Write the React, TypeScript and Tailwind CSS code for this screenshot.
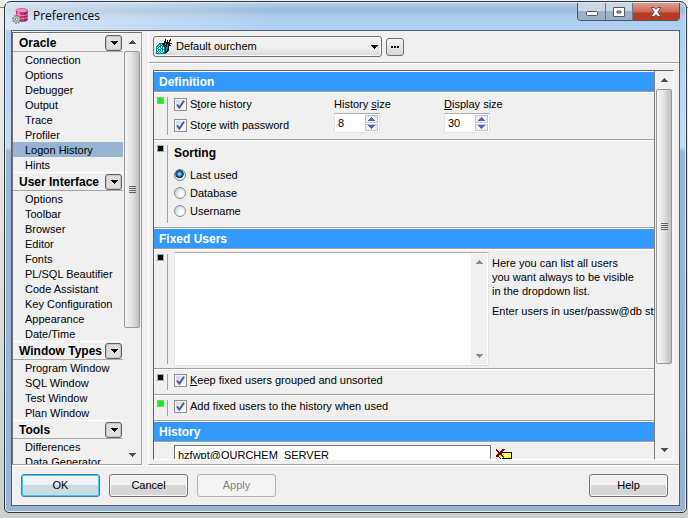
import { ReactNode } from "react";
import clsx from "clsx";

const MENU = [
    { title: "Oracle", items: ["Connection", "Options", "Debugger", "Output", "Trace", "Profiler", "Logon History", "Hints"] },
    {
        title: "User Interface",
        items: [
            "Options",
            "Toolbar",
            "Browser",
            "Editor",
            "Fonts",
            "PL/SQL Beautifier",
            "Code Assistant",
            "Key Configuration",
            "Appearance",
            "Date/Time",
        ],
    },
    { title: "Window Types", items: ["Program Window", "SQL Window", "Test Window", "Plan Window"] },
    { title: "Tools", items: ["Differences", "Data Generator"] },
];

const ACTIVE = "Logon History";

function Arrow({ up = false, className }: { up?: boolean; className?: string }) {
    return (
        <svg viewBox="0 0 8 4" className={clsx("h-1 w-2 shrink-0", className)} fill="currentColor" shapeRendering="crispEdges">
            <path d={up ? "M4 0L8 4H0z" : "M0 0H8L4 4z"} />
        </svg>
    );
}

function ScrollBar({ size, className }: { size: string; className?: string }) {
    return (
        <div className={clsx("flex w-4 shrink-0 flex-col bg-[#f0f0f0]", className)}>
            <button aria-label="Scroll up" className="flex h-[18px] shrink-0 items-center justify-center text-[#505050]">
                <Arrow up />
            </button>
            <div className="min-h-0 flex-1">
                <div
                    className={clsx(
                        "flex w-full flex-col items-center justify-center gap-px rounded-xs border border-[#989898] bg-linear-to-r from-[#f6f6f6] via-[#e2e2e4] to-[#bfc0c4]",
                        size
                    )}
                >
                    {[0, 1, 2, 3].map((i) => (
                        <span key={i} className="h-px w-[7px] bg-[#606060]" />
                    ))}
                </div>
            </div>
            <button aria-label="Scroll down" className="flex h-[18px] shrink-0 items-center justify-center text-[#505050]">
                <Arrow />
            </button>
        </div>
    );
}

function CheckBox({ children }: { children: ReactNode }) {
    return (
        <label className="flex h-[21px] items-center gap-[3px]">
            <span className="grid h-[13px] w-[13px] place-items-center">
                <input
                    type="checkbox"
                    defaultChecked
                    className="peer col-start-1 row-start-1 h-[13px] w-[13px] appearance-none border border-[#8e8f8f] bg-linear-to-br from-[#cfd3da] to-white shadow-[inset_0_0_0_1px_#f4f4f4]"
                />
                <svg viewBox="0 0 9 9" className="pointer-events-none col-start-1 row-start-1 hidden h-[9px] w-[9px] peer-checked:block">
                    <path d="M1 4.5L3.4 7.6L8 0.8" fill="none" stroke="#3f58a0" strokeWidth="1.9" />
                </svg>
            </span>
            <span>{children}</span>
        </label>
    );
}

function Radio({ label, checked = false }: { label: string; checked?: boolean }) {
    return (
        <label className="flex h-[18px] items-center gap-1">
            <input
                type="radio"
                name="sorting"
                defaultChecked={checked}
                className="h-3 w-3 appearance-none rounded-full border border-[#8e8f8f] bg-[radial-gradient(circle_at_65%_65%,#ffffff_20%,#cdd0d4_80%)] checked:border-[#70808c] checked:bg-[radial-gradient(circle_at_45%_40%,#8fe0fa_8%,#1c6a9c_30%,#0f3a60_48%,#f4f4f4_56%)]"
            />
            {label}
        </label>
    );
}

function NumberField({ id, value, children }: { id: string; value: string; children: ReactNode }) {
    return (
        <div className="flex w-[110px] flex-col pt-[3px]">
            <label htmlFor={id} className="flex h-[17px] items-center">
                <span>{children}</span>
            </label>
            <div className="flex h-5 w-[46px] border border-[#e2e3ea] border-t-[#abadb3] bg-white p-px">
                <input id={id} defaultValue={value} className="w-0 min-w-0 flex-1 pl-[2px] outline-none" />
                <div className="flex w-[13px] flex-col gap-px text-[#4a66c0]">
                    <button aria-label={`Increase ${id}`} className="flex flex-1 items-center justify-center border border-[#c3c4c9] bg-[#f1f1f3]">
                        <Arrow up className="w-[7px]" />
                    </button>
                    <button aria-label={`Decrease ${id}`} className="flex flex-1 items-center justify-center border border-[#c3c4c9] bg-[#f1f1f3]">
                        <Arrow className="w-[7px]" />
                    </button>
                </div>
            </div>
        </div>
    );
}

function Heading({ children }: { children: ReactNode }) {
    return (
        <h2 className="flex h-[21px] shrink-0 items-center border-t border-b border-t-white border-b-[#a0a0a0] bg-[#3399ff] pl-[5px] text-xs font-bold text-white">
            {children}
        </h2>
    );
}

function Section({ changed = false, className, children }: { changed?: boolean; className?: string; children: ReactNode }) {
    return (
        <section className={clsx("flex shrink-0 border-t border-b border-t-white border-b-[#a0a0a0] px-[3px]", className)}>
            <div className="w-[10px] shrink-0 pt-1">
                <div className={clsx("h-[7px] w-[7px] border border-[#a8a8a8]", changed ? "bg-[#00ff00]" : "bg-black")} />
            </div>
            <div className="my-1 w-px shrink-0 bg-[#a0a0a0]" />
            <div className="min-w-0 flex-1 pl-[6px]">{children}</div>
        </section>
    );
}

function PushButton({ children, primary = false, disabled = false }: { children: ReactNode; primary?: boolean; disabled?: boolean }) {
    return (
        <button
            disabled={disabled}
            className={clsx(
                "h-[23px] w-[79px] rounded-[3px] border",
                disabled && "border-[#b0b4b8] bg-[#f4f4f4] text-[#838383]",
                primary && "border-[#3c7fb1] bg-linear-to-b from-[#f0f5f8] from-50% to-[#ccdbe3] to-50% shadow-[inset_0_0_0_1px_#43c8f0]",
                !primary && !disabled && "border-[#707070] bg-linear-to-b from-[#f1f1f1] from-50% to-[#d6d6d6] to-50% shadow-[inset_0_0_0_1px_#f8f8f8]"
            )}
        >
            {children}
        </button>
    );
}

function DatabaseIcon() {
    return (
        <svg viewBox="0 0 16 16" className="h-4 w-4 shrink-0">
            <path d="M4 2.500V12C4 14.500 15.500 14.500 15.500 12V2.500z" fill="#c4326f" />
            <path d="M5 3V12L8 13.500V4z" fill="#e887ad" />
            <path d="M12 4V13.500L15.500 12V2.500z" fill="#a51c59" />
            <ellipse cx="9.750" cy="2.500" rx="5.750" ry="2" fill="#ee9bbb" stroke="#b53068" strokeWidth=".6" />
            <path d="M4 6.500C6 8 13 8 15.500 6.500M4 9.500C6 11 13 11 15.500 9.500" stroke="#f3b4cb" strokeWidth=".7" fill="none" />
            <circle cx="4.700" cy="11.200" r="4.100" fill="none" stroke="#666" strokeWidth="1" strokeDasharray="1.6 1.6" />
            <circle cx="4.700" cy="11.200" r="3.300" fill="#d4d4d4" stroke="#777" strokeWidth=".8" />
            <circle cx="4.700" cy="11.200" r="1.400" fill="#f4f4f4" stroke="#6b6b6b" strokeWidth=".9" />
        </svg>
    );
}

function ProfileIcon() {
    return (
        <svg viewBox="0 0 16 15" className="h-[15px] w-4 shrink-0" shapeRendering="crispEdges">
            <path d="M0 8L3 4H8L10 7V15H0z" fill="#008888" />
            <path
                d="M1 8h1v1H1zM3 6h1v1H3zM5 5h1v1H5zM3 8h1v2H3zM5 7h1v2H5zM1 10h1v2H1zM3 11h1v1H3zM5 10h1v2H5zM7 11h1v2H7zM1 13h1v1H1zM3 13h1v1H3zM5 13h1v1H5zM7 8h1v2H7z"
                fill="#c8ffff"
            />
            <path d="M2 7h1v1H2zM4 9h1v1H4zM6 6h1v1H6zM2 12h1v1H2zM4 12h1v1H4zM6 12h1v2H6zM2 9h1v1H2z" fill="#40e8e8" />
            <path d="M6 4H8V2H9V0H10V3H11V1H12V3H13V1H14V0H15V2H14V4H16V5H14V6H15V7H13V11L11 14H9V8L6 6z" fill="#101818" />
            <path d="M9 4h1v2H9zM11 5h1v5h-1zM10 8h1v4h-1z" fill="#00a0a0" />
        </svg>
    );
}

function ClearIcon() {
    return (
        <svg viewBox="0 0 16 14" className="h-[14px] w-4 shrink-0" shapeRendering="crispEdges">
            <path d="M2 7L6 3.500H15.500V9.500H6V11z" fill="#ffff30" stroke="#000" />
            <path d="M7 4h1v1H7zM9 4h1v1H9zM11 4h1v1h-1zM13 4h1v1h-1zM8 6h1v1H8zM10 6h1v1h-1zM12 6h1v1h-1z" fill="#fff" />
            <path d="M0 1L8 8M8 0L0 8" stroke="#800000" strokeWidth="1.6" fill="none" />
        </svg>
    );
}

function TitleBar() {
    return (
        <header className="flex h-[27px] shrink-0 items-start justify-between bg-linear-to-r from-white/50 to-transparent to-40% pr-[5px] pl-[6px]">
            <div className="flex h-[26px] items-center gap-[5px]">
                <DatabaseIcon />
                <h1 className="font-['Open_Sans','Noto_Sans',sans-serif] text-xs">Preferences</h1>
            </div>
            <div className="flex h-[18px] overflow-hidden rounded-b-[4px] border border-t-0 border-[#46566a]">
                <button aria-label="Minimize" className="flex w-7 items-center justify-center border-r border-[#66788c] bg-linear-to-b from-[#c9d6e3] from-50% to-[#9db1c6] to-50%">
                    <svg viewBox="0 0 12 10" className="h-[10px] w-3">
                        <rect x=".5" y="4.5" width="11" height="4" rx="1" fill="#fff" stroke="#4c5a6a" />
                    </svg>
                </button>
                <button aria-label="Maximize" className="flex w-[27px] items-center justify-center border-r border-[#66788c] bg-linear-to-b from-[#c9d6e3] from-50% to-[#9db1c6] to-50%">
                    <svg viewBox="0 0 12 10" className="h-[10px] w-3">
                        <path d="M.5 .5H11.500V9.500H.5zM4 4H8V6H4z" fill="#fff" fillRule="evenodd" stroke="#4c5a6a" />
                    </svg>
                </button>
                <button aria-label="Close" className="flex w-[46px] items-center justify-center bg-linear-to-b from-[#dd9c8e] from-0% via-[#cf6a55] via-50% to-[#b93a22] to-60%">
                    <svg viewBox="0 0 12 10" className="h-[10px] w-3">
                        <path d="M1 .5H4.300L6 2.400L7.700 .5H11L7.800 5L11 9.500H7.700L6 7.600L4.300 9.500H1L4.200 5z" fill="#fff" stroke="#6a3a3a" strokeWidth=".9" />
                    </svg>
                </button>
            </div>
        </header>
    );
}

function Sidebar() {
    return (
        <aside className="flex w-[130px] shrink-0 border border-t-[#707070] border-r-[#a0a0a0] border-b-[#a0a0a0] border-l-[#707070]">
            <nav className="min-w-0 flex-1 overflow-hidden">
                {MENU.map((group) => (
                    <div key={group.title}>
                        <div className="flex h-[19px] items-center justify-between border-t border-b border-t-white border-b-[#a8a8a8] pr-px pl-[6px]">
                            <h2 className="text-xs font-bold">{group.title}</h2>
                            <button
                                aria-label={`Collapse ${group.title}`}
                                className="flex h-4 w-[17px] items-center justify-center rounded-[3px] border border-[#606060] bg-[#dedede] shadow-[inset_0_0_0_1px_#c4c4c4]"
                            >
                                <Arrow />
                            </button>
                        </div>
                        <ul>
                            {group.items.map((item) => (
                                <li key={item}>
                                    <a href="#" className={clsx("block h-[15px] pl-3 leading-4 whitespace-nowrap", item === ACTIVE && "bg-[#99b4d1]")}>
                                        {item}
                                    </a>
                                </li>
                            ))}
                        </ul>
                    </div>
                ))}
            </nav>
            <ScrollBar size="h-[70%]" className="mx-px" />
        </aside>
    );
}

function Toolbar() {
    return (
        <div className="flex shrink-0 items-center gap-1 border-b border-[#a0a0a0] pt-1 pb-[5px] pl-1">
            <div className="flex h-[21px] w-[229px] items-center rounded-[3px] border border-[#707070] bg-linear-to-b from-[#f1f1f1] from-50% to-[#d8d8d8] pr-[3px] pl-[2px] shadow-[inset_0_0_0_1px_#f8f8f8]">
                <ProfileIcon />
                <select aria-label="Preference set" className="min-w-0 flex-1 appearance-none bg-transparent pl-1 outline-none">
                    <option>Default ourchem</option>
                </select>
                <Arrow />
            </div>
            <button
                aria-label="Edit preference sets"
                className="flex h-[18px] w-[18px] items-center justify-center gap-px rounded-[3px] border border-[#707070] bg-linear-to-b from-[#f4f4f4] to-[#d8d8d8]"
            >
                <span className="h-[2px] w-[2px] bg-black" />
                <span className="h-[2px] w-[2px] bg-black" />
                <span className="h-[2px] w-[2px] bg-black" />
            </button>
        </div>
    );
}

function Settings() {
    return (
        <div className="flex min-h-0 min-w-0 flex-1 border border-t-[#606060] border-r-white border-b-white border-l-[#606060]">
            <div className="flex min-w-0 flex-1 flex-col overflow-hidden border-r border-[#808080]">
                <Heading>Definition</Heading>
                <Section changed className="h-12">
                    <div className="flex">
                        <div className="w-40 pt-px">
                            <CheckBox>
                                S<u>t</u>ore history
                            </CheckBox>
                            <CheckBox>
                                Sto<u>r</u>e with password
                            </CheckBox>
                        </div>
                        <NumberField id="history-size" value="8">
                            History <u>s</u>ize
                        </NumberField>
                        <NumberField id="display-size" value="30">
                            <u>D</u>isplay size
                        </NumberField>
                    </div>
                </Section>
                <Section className="h-[88px]">
                    <h3 className="pt-1 pb-[5px] text-xs leading-4 font-bold">Sorting</h3>
                    <Radio label="Last used" checked />
                    <Radio label="Database" />
                    <Radio label="Username" />
                </Section>
                <Heading>Fixed Users</Heading>
                <Section>
                    <div className="flex gap-[3px] pt-[2px] pb-[2px]">
                        <div className="flex h-[114px] w-[315px] shrink-0 border border-[#e2e3ea] border-t-[#abadb3] bg-white p-px">
                            <textarea aria-label="Fixed users" className="min-w-0 flex-1 resize-none outline-none" />
                            <div className="flex w-4 flex-col justify-between bg-[#f0f0f0] py-[6px] text-[#8a8a8a]">
                                <Arrow up className="self-center" />
                                <Arrow className="self-center" />
                            </div>
                        </div>
                        <div className="pt-1 leading-[14px] whitespace-nowrap">
                            <p>
                                Here you can list all users
                                <br />
                                you want always to be visible
                                <br />
                                in the dropdown list.
                            </p>
                            <p className="pt-[6px]">Enter users in user/passw@db style</p>
                        </div>
                    </div>
                </Section>
                <Section className="h-[26px]">
                    <CheckBox>
                        <u>K</u>eep fixed users grouped and unsorted
                    </CheckBox>
                </Section>
                <Section changed className="h-[26px]">
                    <CheckBox>Add fixed users to the history when used</CheckBox>
                </Section>
                <Heading>History</Heading>
                <div className="flex shrink-0 items-start gap-[5px] border-t border-white pt-[2px] pl-5">
                    <input
                        aria-label="History entry"
                        defaultValue="hzfwpt@OURCHEM_SERVER"
                        className="h-[19px] w-[317px] border border-[#707070] bg-white pl-[3px] outline-none"
                    />
                    <button aria-label="Clear history" className="pt-1">
                        <ClearIcon />
                    </button>
                </div>
            </div>
            <ScrollBar size="h-[78%]" className="mx-px" />
        </div>
    );
}

export default function App() {
    return (
        <div className="flex h-screen bg-[linear-gradient(#f0f0f0_7px,#808080_7px,#808080_8px,#f0f0f0_8px,#cdcfcd)] pt-px pr-px pb-[5px] pl-1 font-['Liberation_Sans',Arial,sans-serif] text-[11px] text-black">
            <div className="flex min-w-0 flex-1 flex-col rounded-t-[7px] rounded-b-[5px] border border-[#30383f] bg-[linear-gradient(#b6d3ee,#9dbbd6_8px,#aecff2_16px,#b0d0f2_28px,#c4daf1_145px,#98b6d8_150px,#98b4d2)] p-px shadow-[inset_0_0_0_1px_#dcecf8]">
                <TitleBar />
                <main className="mx-[5px] mb-[5px] flex min-h-0 flex-1 flex-col border border-[#50606f] bg-[#f0f0f0] pt-px">
                    <div className="flex min-h-0 flex-1 gap-[6px]">
                        <Sidebar />
                        <div className="flex min-w-0 flex-1 flex-col border-b border-l border-b-[#a0a0a0] border-l-white">
                            <Toolbar />
                            <div className="flex min-h-0 flex-1 border-t border-white pt-[6px] pr-[5px] pb-1 pl-1">
                                <Settings />
                            </div>
                        </div>
                    </div>
                    <footer className="flex shrink-0 items-center gap-[9px] border-t border-white pt-2 pr-[11px] pb-2 pl-[9px]">
                        <PushButton primary>OK</PushButton>
                        <PushButton>Cancel</PushButton>
                        <PushButton disabled>Apply</PushButton>
                        <div className="flex-1" />
                        <PushButton>Help</PushButton>
                    </footer>
                </main>
            </div>
        </div>
    );
}
